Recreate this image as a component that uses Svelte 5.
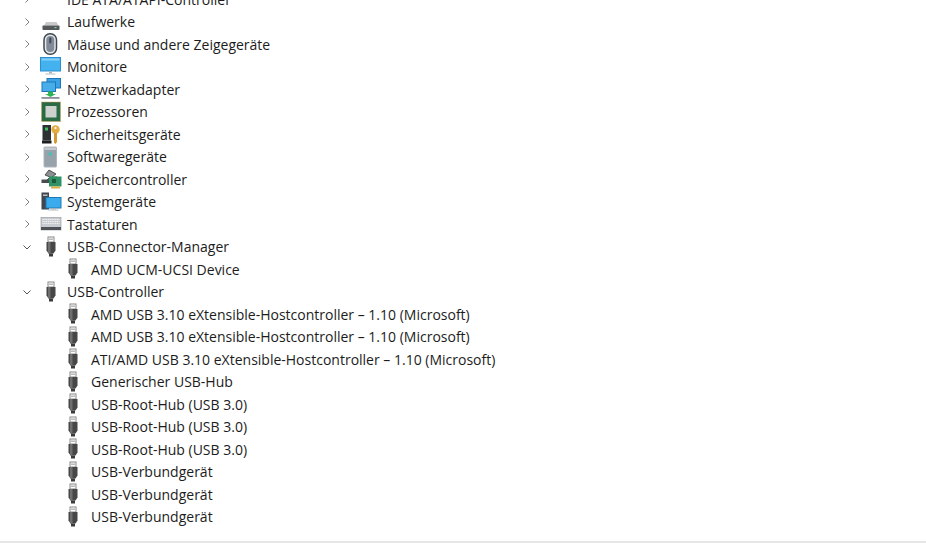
<script>
  const top = [
    ['IDE ATA/ATAPI-Controller', 'ide'],
    ['Laufwerke', 'drive'],
    ['Mäuse und andere Zeigegeräte', 'mouse'],
    ['Monitore', 'monitor'],
    ['Netzwerkadapter', 'net'],
    ['Prozessoren', 'cpu'],
    ['Sicherheitsgeräte', 'sec'],
    ['Softwaregeräte', 'soft'],
    ['Speichercontroller', 'storage'],
    ['Systemgeräte', 'system'],
    ['Tastaturen', 'keyboard']
  ];
  const controllers = [
    'AMD USB 3.10 eXtensible-Hostcontroller – 1.10 (Microsoft)',
    'AMD USB 3.10 eXtensible-Hostcontroller – 1.10 (Microsoft)',
    'ATI/AMD USB 3.10 eXtensible-Hostcontroller – 1.10 (Microsoft)',
    'Generischer USB-Hub',
    'USB-Root-Hub (USB 3.0)',
    'USB-Root-Hub (USB 3.0)',
    'USB-Root-Hub (USB 3.0)',
    'USB-Verbundgerät',
    'USB-Verbundgerät',
    'USB-Verbundgerät'
  ];
</script>

{#snippet usb()}
  <svg class="icon" viewBox="0 0 22 22">
    <rect x="8" y="1" width="6" height="5" fill="#fff" stroke="#888" />
    <rect x="9.500" y="2.500" width="1" height="1.400" fill="#666" />
    <rect x="11.500" y="2.500" width="1" height="1.400" fill="#666" />
    <path d="M6.500 6h9v8.500l-2 3h-5l-2-3z" fill="#474747" />
    <path d="M8 6h2.500v11.500h-2l-.5-1z" fill="#6f6f6f" />
    <rect x="9" y="17.500" width="4" height="3" fill="#3a3a3a" />
  </svg>
{/snippet}

{#snippet icon(k)}
  <svg class="icon" viewBox="0 0 22 22">
    {#if k === 'ide'}
      <rect x="5" y="-4" width="14" height="12" fill="#2f8f5f" />
      <rect x="8" y="-2" width="7" height="6" fill="#17603f" />
      <rect x="8" y="5.500" width="9" height="2.500" fill="#e0b040" />
    {:else if k === 'drive'}
      <path d="M4 14.500l2-3.500h10.500l2 3.500z" fill="#c9c9c9" />
      <rect x="2.500" y="14.500" width="17" height="4.500" rx="0.800" fill="#55585a" />
      <rect x="14.500" y="16" width="2" height="1.200" fill="#7fd08a" />
    {:else if k === 'mouse'}
      <rect x="4" y="0.800" width="12.500" height="20.500" rx="6" fill="#e4e8eb" stroke="#3f4850" stroke-width="1.500" />
      <rect x="6.300" y="3" width="8" height="16" rx="4" fill="#808a99" />
      <rect x="9.300" y="4.500" width="2" height="6" rx="1" fill="#3f4a55" />
    {:else if k === 'monitor'}
      <rect x="0.500" y="1.500" width="20" height="13.500" fill="#45b2f0" stroke="#2a8fd0" />
      <rect x="1.500" y="2.500" width="18" height="2" fill="#86d0f6" />
      <rect x="9" y="15.500" width="3" height="2" fill="#b0b4b8" />
      <rect x="5.500" y="17.500" width="10" height="1" fill="#b8c0c8" />
    {:else if k === 'net'}
      <rect x="7" y="0.500" width="13.500" height="9.500" fill="#3aa2e6" stroke="#1f76b4" />
      <rect x="2" y="4" width="13.500" height="9.500" fill="#48aeea" stroke="#1f76b4" />
      <path d="M8 13.500h5v2.500h3l-5.500 3-5.500-3h3z" fill="#2fb455" />
      <rect x="1.500" y="19" width="18" height="1.800" fill="#8a9096" />
    {:else if k === 'cpu'}
      <rect x="1.500" y="1" width="19" height="19.500" fill="#2d6a46" stroke="#c9a95a" stroke-dasharray="1 1" />
      <rect x="3" y="2.500" width="16" height="16.500" fill="#2a6a44" />
      <rect x="5.500" y="5" width="11" height="11.500" fill="#cdd2ce" />
    {:else if k === 'sec'}
      <rect x="2.500" y="2" width="8.500" height="15.500" fill="#2d3134" />
      <rect x="5" y="4.500" width="3" height="3" fill="#3fbf60" />
      <rect x="2" y="17.500" width="9.500" height="3" fill="#1c1e20" />
      <circle cx="15.500" cy="6.500" r="4.200" fill="#e2ad45" />
      <circle cx="15.500" cy="5" r="1.100" fill="#fff" />
      <path d="M14 10h3v9l-1.500 2-1.500-1.500z" fill="#d39a33" />
    {:else if k === 'soft'}
      <rect x="4" y="1" width="12.500" height="20" rx="0.800" fill="#98a2ab" stroke="#aeb6bc" />
      <rect x="4.500" y="1.500" width="11.500" height="2.500" fill="#c3c9ce" />
      <circle cx="10.300" cy="8" r="1.700" fill="#3fc2b8" />
    {:else if k === 'storage'}
      <path d="M5 7l4-5 7 4-4 3h5l-5 3H7l3-3z" fill="#8b8f92" stroke="#333" stroke-width="0.800" />
      <rect x="1.500" y="11.500" width="9" height="3.500" fill="#4a4d50" />
      <rect x="9" y="8.500" width="12.500" height="10" fill="#2f9365" />
      <rect x="12" y="11" width="4" height="4" fill="#1a5a3d" />
      <rect x="11" y="18.500" width="9" height="2" fill="#dcb044" />
    {:else if k === 'system'}
      <rect x="1.500" y="1.500" width="7.500" height="17" fill="#41474c" />
      <rect x="3" y="3.500" width="4.500" height="1.500" fill="#bfc4c8" />
      <rect x="6" y="6.500" width="15" height="10.500" fill="#3aabec" stroke="#1f78b8" />
      <rect x="11" y="17" width="5" height="1.500" fill="#a8aeb2" />
      <rect x="8.500" y="18.500" width="10" height="1" fill="#b8bec4" />
    {:else if k === 'keyboard'}
      <rect x="1" y="4.500" width="20" height="12.500" fill="#c8ccd0" stroke="#8f9498" stroke-width="0.600" />
      <path d="M2.500 6.500h17M2.500 8.500h17M2.500 10.500h17" stroke="#f0f2f4" stroke-width="1" stroke-dasharray="1.200 .6" />
      <rect x="1" y="14" width="20" height="3" fill="#4e5257" />
    {/if}
  </svg>
{/snippet}

{#snippet closed()}
  <svg class="chev" viewBox="0 0 10 10"><path d="M3.500 1.500L7 5L3.500 8.500" fill="none" stroke="#808080" stroke-width="1" /></svg>
{/snippet}
{#snippet open()}
  <svg class="chev" viewBox="0 0 10 10"><path d="M1.500 3.500L5 7L8.500 3.500" fill="none" stroke="#555" stroke-width="1" /></svg>
{/snippet}

<main>
  <ul class="tree">
    {#each top as [label, k]}
      <li class="row">{@render closed()}{@render icon(k)}<span>{label}</span></li>
    {/each}
    <li class="row">{@render open()}{@render usb()}<span>USB-Connector-Manager</span></li>
    <li class="row child">{@render usb()}<span>AMD UCM-UCSI Device</span></li>
    <li class="row">{@render open()}{@render usb()}<span>USB-Controller</span></li>
    {#each controllers as label}
      <li class="row child">{@render usb()}<span>{label}</span></li>
    {/each}
  </ul>
  <div class="rule"></div>
</main>

<style>
  :global(body) { background: #fff; }
  main {
    width: 926px;
    height: 544px;
    overflow: hidden;
    display: flex;
    flex-direction: column;
    justify-content: flex-end;
    background: #fff;
    font-family: "Open Sans", "Noto Sans", sans-serif;
    font-size: 14px;
    color: #1c1c1c;
  }
  .tree {
    list-style: none;
    margin: 0 0 13px;
    padding: 0 0 0 22px;
  }
  .row {
    height: 22.500px;
    display: flex;
    align-items: center;
    white-space: nowrap;
  }
  .child { padding-left: 40px; }
  .chev { width: 10px; height: 10px; margin-right: 8px; flex: none; }
  .icon { width: 22px; height: 22px; margin-right: 5px; flex: none; overflow: visible; }
  .child .icon { margin-right: 7px; }
  .rule { height: 2px; margin-bottom: 1px; background: #e6e6e6; flex: none; }
</style>
